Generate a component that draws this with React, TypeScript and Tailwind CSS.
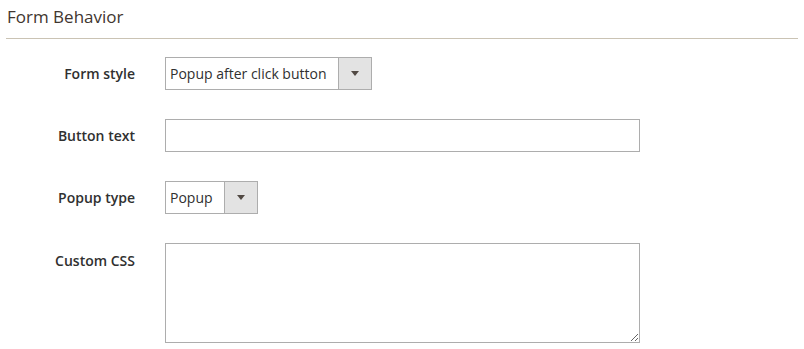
import React from 'react';

const font = { fontFamily: '"Open Sans", "Noto Sans", sans-serif' };

const Arrow = () => (
  <svg width="8" height="5" viewBox="0 0 8 5" className="block">
    <path d="M0 0h8L4 5z" fill="#514943" />
  </svg>
);

const Select = ({ value, width }: { value: string; width: string }) => (
  <div className={`flex h-[33px] ${width} border border-[#adadad] bg-white`}>
    <div className="flex-1 flex items-center pl-[4px] text-[14px] text-[#303030] whitespace-nowrap">{value}</div>
    <div className="w-[33px] flex items-center justify-center border-l border-[#adadad] bg-[#e3e3e3]">
      <Arrow />
    </div>
  </div>
);

const Row = ({ label, children, top }: { label: string; children: React.ReactNode; top?: boolean }) => (
  <div className={`flex ${top ? 'items-start' : 'items-center'}`}>
    <label
      className={`w-[135px] shrink-0 text-right text-[14px] font-semibold text-[#303030] ${top ? 'pt-[7px]' : ''}`}
    >
      {label}
    </label>
    <div className="ml-[30px]">{children}</div>
  </div>
);

export default function App() {
  return (
    <div className="w-[804px] h-[349px] bg-white overflow-hidden" style={font}>
      <div className="mx-[6px] w-[792px] border-b border-[#cac3b4] pt-[6px] h-[39px]">
        <h2 className="pl-[1px] text-[17px] leading-[22px] text-[#41362f]">Form Behavior</h2>
      </div>
      <div className="mt-[18px] flex flex-col gap-[29px]">
        <Row label="Form style">
          <Select value="Popup after click button" width="w-[207px]" />
        </Row>
        <Row label="Button text">
          <div className="h-[33px] w-[475px] border border-[#adadad] bg-white" />
        </Row>
        <Row label="Popup type">
          <Select value="Popup" width="w-[93px]" />
        </Row>
        <Row label="Custom CSS" top>
          <textarea className="block h-[100px] w-[475px] border border-[#adadad] bg-white outline-none" />
        </Row>
      </div>
    </div>
  );
}
